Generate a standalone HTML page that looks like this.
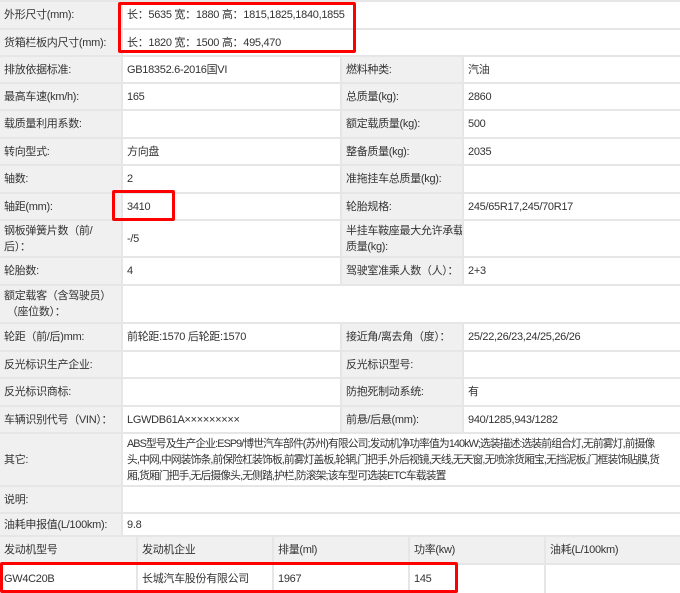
<!DOCTYPE html><html><head><meta charset="utf-8"><style>
body{margin:0;width:680px;height:593px;background:#e6e6e6;position:relative;overflow:hidden;font-family:"Liberation Sans","Noto Sans CJK SC",sans-serif;font-size:11px;color:#333;letter-spacing:-0.3px}
.c{position:absolute;box-sizing:border-box;display:flex;align-items:center;padding-left:4px;line-height:16px;white-space:nowrap;overflow:hidden}
.g{background:#f0f0f0}.w{background:#fff}
.r{position:absolute;border:3px solid #f00;border-radius:2px;box-sizing:border-box}
</style></head><body>
<div id="t"></div>
<script>
var rows=[[2,28,"外形尺寸(mm):","长：5635 宽：1880 高：1815,1825,1840,1855"],
[30,55,"货箱栏板内尺寸(mm):","长：1820 宽：1500 高：495,470"],
[57,82,"排放依据标准:","GB18352.6-2016国VI","燃料种类:","汽油"],
[84,109,"最高车速(km/h):","165","总质量(kg):","2860"],
[111,137,"载质量利用系数:","","额定载质量(kg):","500"],
[139,164,"转向型式:","方向盘","整备质量(kg):","2035"],
[166,192,"轴数:","2","准拖挂车总质量(kg):",""],
[194,219,"轴距(mm):","3410","轮胎规格:","245/65R17,245/70R17"],
[221,256,"钢板弹簧片数（前/<br>后）：","-/5","半挂车鞍座最大允许承载<br>质量(kg):",""],
[258,284,"轮胎数:","4","驾驶室准乘人数（人）：","2+3"],
[286,322,"额定载客（含驾驶员）<br>&nbsp;（座位数）：",""],
[324,350,"轮距（前/后)mm:","前轮距:1570 后轮距:1570","接近角/离去角（度）：","25/22,26/23,24/25,26/26"],
[352,377,"反光标识生产企业:","","反光标识型号:",""],
[379,405,"反光标识商标:","","防抱死制动系统:","有"],
[407,432,"车辆识别代号（VIN）：","LGWDB61A×××××××××","前悬/后悬(mm):","940/1285,943/1282"],
[434,485,"其它:","<span style='letter-spacing:-0.9px;font-size:10.8px'>ABS型号及生产企业:ESP9/博世汽车部件(苏州)有限公司;发动机净功率值为140kW;选装描述:选装前组合灯,无前雾灯,前摄像<br>头,中网,中网装饰条,前保险杠装饰板,前雾灯盖板,轮辋,门把手,外后视镜,天线,无天窗,无喷涂货厢宝,无挡泥板,门框装饰贴膜,货<br>厢,货厢门把手,无后摄像头,无侧踏,护栏,防滚架;该车型可选装ETC车载装置</span>"],
[487,512,"说明:",""],
[514,535,"油耗申报值(L/100km):","9.8"]];
var h="";
function cell(x1,x2,y1,y2,cls,t){h+='<div class="c '+cls+'" style="left:'+x1+'px;width:'+(x2-x1)+'px;top:'+y1+'px;height:'+(y2-y1)+'px">'+t+'</div>';}
rows.forEach(function(r){
cell(0,121,r[0],r[1],"g",r[2]);
if(r.length==4){cell(123,680,r[0],r[1],"w",r[3]);}
else{cell(123,340,r[0],r[1],"w",r[3]);cell(342,462,r[0],r[1],"g",r[4]);cell(464,680,r[0],r[1],"w",r[5]);}
});
var xs=[0,136,272,408,544,680];
var hd=["发动机型号","发动机企业","排量(ml)","功率(kw)","油耗(L/100km)"],vd=["GW4C20B","长城汽车股份有限公司","1967","145",""];
for(var i=0;i<5;i++){cell(xs[i]+(i?2:0),xs[i+1],537,563,"g",hd[i]);cell(xs[i]+(i?2:0),xs[i+1],565,593,"w",vd[i]);}
h+='<div class="r" style="left:118px;top:2px;width:238px;height:51px"></div>';
h+='<div class="r" style="left:112px;top:190px;width:63px;height:31px"></div>';
h+='<div class="r" style="left:0px;top:562px;width:458px;height:31px"></div>';
document.getElementById("t").innerHTML=h;
</script></body></html>
